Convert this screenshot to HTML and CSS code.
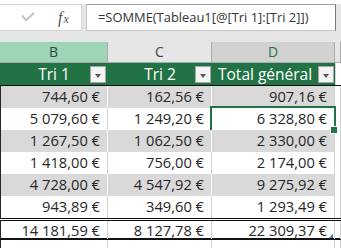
FILE: index.html
```html
<!DOCTYPE html>
<html lang="fr">
<head>
<meta charset="utf-8">
<title>Tableau1</title>
<link rel="stylesheet" href="styles.css">
</head>
<body>
<div class="top-strip"></div>
<div class="formula-bar">
  <div class="fb-left">
    <svg class="check" width="16" height="12" viewBox="0 0 16 12"><polyline points="1,3.5 5,8 13,1" fill="none" stroke="#c3c3c3" stroke-width="2"/></svg>
    <span class="fx"><span class="fx-f">f</span><span class="fx-x">x</span></span>
  </div>
  <div class="fb-input">=SOMME(Tableau1[@[Tri 1]:[Tri 2]])</div>
</div>
<div class="sheet">
  <div class="row col-heads">
    <div class="ch ch-sel">B</div>
    <div class="ch">C</div>
    <div class="ch ch-active">D</div>
    <div class="ch"></div>
  </div>
  <div class="row thead">
    <div class="th th-c">Tri 1<span class="filter"></span></div>
    <div class="th th-c">Tri 2<span class="filter"></span></div>
    <div class="th th-l">Total général<span class="filter"></span></div>
    <div class="th-e"></div>
  </div>
  <div class="row band first">
    <div class="td">744,60&nbsp;€</div><div class="td">162,56&nbsp;€</div><div class="td">907,16&nbsp;€</div><div class="te"></div>
  </div>
  <div class="row">
    <div class="td">5&nbsp;079,60&nbsp;€</div><div class="td">1&nbsp;249,20&nbsp;€</div><div class="td selected">6&nbsp;328,80&nbsp;€</div><div class="te"></div>
  </div>
  <div class="row band">
    <div class="td">1&nbsp;267,50&nbsp;€</div><div class="td">1&nbsp;062,50&nbsp;€</div><div class="td">2&nbsp;330,00&nbsp;€</div><div class="te"></div>
  </div>
  <div class="row">
    <div class="td">1&nbsp;418,00&nbsp;€</div><div class="td">756,00&nbsp;€</div><div class="td">2&nbsp;174,00&nbsp;€</div><div class="te"></div>
  </div>
  <div class="row band">
    <div class="td">4&nbsp;728,00&nbsp;€</div><div class="td">4&nbsp;547,92&nbsp;€</div><div class="td">9&nbsp;275,92&nbsp;€</div><div class="te"></div>
  </div>
  <div class="row">
    <div class="td">943,89&nbsp;€</div><div class="td">349,60&nbsp;€</div><div class="td">1&nbsp;293,49&nbsp;€</div><div class="te"></div>
  </div>
  <div class="row total">
    <div class="td">14&nbsp;181,59&nbsp;€</div><div class="td">8&nbsp;127,78&nbsp;€</div><div class="td resize">22&nbsp;309,37&nbsp;€</div><div class="te"></div>
  </div>
  <div class="row empty">
    <div class="td"></div><div class="td"></div><div class="td"></div><div class="te"></div>
  </div>
</div>
</body>
</html>
```
FILE: styles.css
```css
* { box-sizing: border-box; }
html, body { margin: 0; padding: 0; }
body {
  width: 341px;
  height: 248px;
  overflow: hidden;
  background: #ffffff;
  font-family: "Open Sans", "Noto Sans", sans-serif;
  color: #262626;
}
.top-strip { height: 4px; background: #ffffff; }
.formula-bar {
  display: flex;
  height: 38px;
  padding-bottom: 11px;
  background: #e6e6e6;
}
.fb-left {
  width: 82px;
  background: #ffffff;
  border-top: 1px solid #d4d4d4;
  border-right: 1px solid #d4d4d4;
  border-bottom: 1px solid #d4d4d4;
  display: flex;
  align-items: center;
  padding-left: 21px;
}
.check { margin-top: 1px; }
.fx {
  margin-left: 21px;
  font-family: "Liberation Serif", serif;
  font-style: italic;
  color: #555555;
  display: flex;
  align-items: baseline;
}
.fx-f { font-size: 16px; }
.fx-x { font-size: 12px; margin-left: 1px; }
.fb-input {
  margin-left: 4px;
  width: 250px;
  background: #ffffff;
  border: 1px solid #c6c6c6;
  border-top-color: #a0a0a0;
  border-right-color: #7a7a7a;
  font-size: 12.9px;
  line-height: 25px;
  padding-left: 11px;
  color: #333333;
  white-space: nowrap;
  overflow: hidden;
}
.sheet { position: relative; }
.row {
  display: grid;
  grid-template-columns: 108px 104px 123px 6px;
}
.col-heads { height: 21px; background: #e6e6e6; }
.ch {
  border-right: 1px solid #ababab;
  border-bottom: 1px solid #ababab;
  font-size: 14px;
  line-height: 20px;
  text-align: center;
  color: #444444;
}
.ch-sel { background: #9fd5b7; color: #2b4a3a; }
.ch-active { background: #d2d2d2; color: #217346; }
.thead {
  height: 23px;
  background: #217346;
  border-bottom: 1px solid #111111;
}
.th {
  position: relative;
  color: #ffffff;
  font-size: 15.5px;
  line-height: 22px;
  white-space: nowrap;
}
.th-c { text-align: center; }
.th-l { text-align: left; padding-left: 6px; }
.th-e { background: #ffffff; border-left: 1px solid #d4d4d4; }
.filter {
  position: absolute;
  right: 1px;
  top: 3px;
  width: 16px;
  height: 17px;
  background: #f4f4f4;
  border: 1px solid #a6a6a6;
}
.th:nth-child(1) .filter { right: 2px; }
.filter::after {
  content: "";
  position: absolute;
  left: 4px;
  top: 7px;
  border-left: 3.5px solid transparent;
  border-right: 3.5px solid transparent;
  border-top: 4px solid #595959;
}
.row:not(.col-heads):not(.thead) { height: 22px; }
.row.first { height: 21px; }
.row.empty { height: 8px; }
.td {
  position: relative;
  border-right: 1px solid #d4d4d4;
  text-align: right;
  padding-right: 7px;
  font-size: 14.7px;
  line-height: 21px;
  white-space: nowrap;
}
.row > .td:first-child { border-left: 1px solid #262626; }
.te { border-right: 1px solid #d4d4d4; }
.band .td { background: #d9d9d9; border-right-color: #ffffff; }
.band .td:nth-child(3) { border-right-color: #d4d4d4; }
.row.total {
  height: 23px;
  border-top: 3px double #111111;
  border-bottom: 2px solid #111111;
}
.row.total .td { line-height: 18px; }
.selected::after {
  content: "";
  position: absolute;
  left: -2px;
  top: -2px;
  right: -2px;
  bottom: -2px;
  border: 2px solid #217346;
}
.selected::before {
  content: "";
  position: absolute;
  right: -4px;
  bottom: -4px;
  width: 6px;
  height: 6px;
  background: #217346;
  border: 1px solid #ffffff;
  z-index: 2;
}
.resize::after {
  content: "";
  position: absolute;
  right: 1px;
  bottom: 1px;
  border-left: 4px solid transparent;
  border-bottom: 4px solid #4a6fc0;
}
```
